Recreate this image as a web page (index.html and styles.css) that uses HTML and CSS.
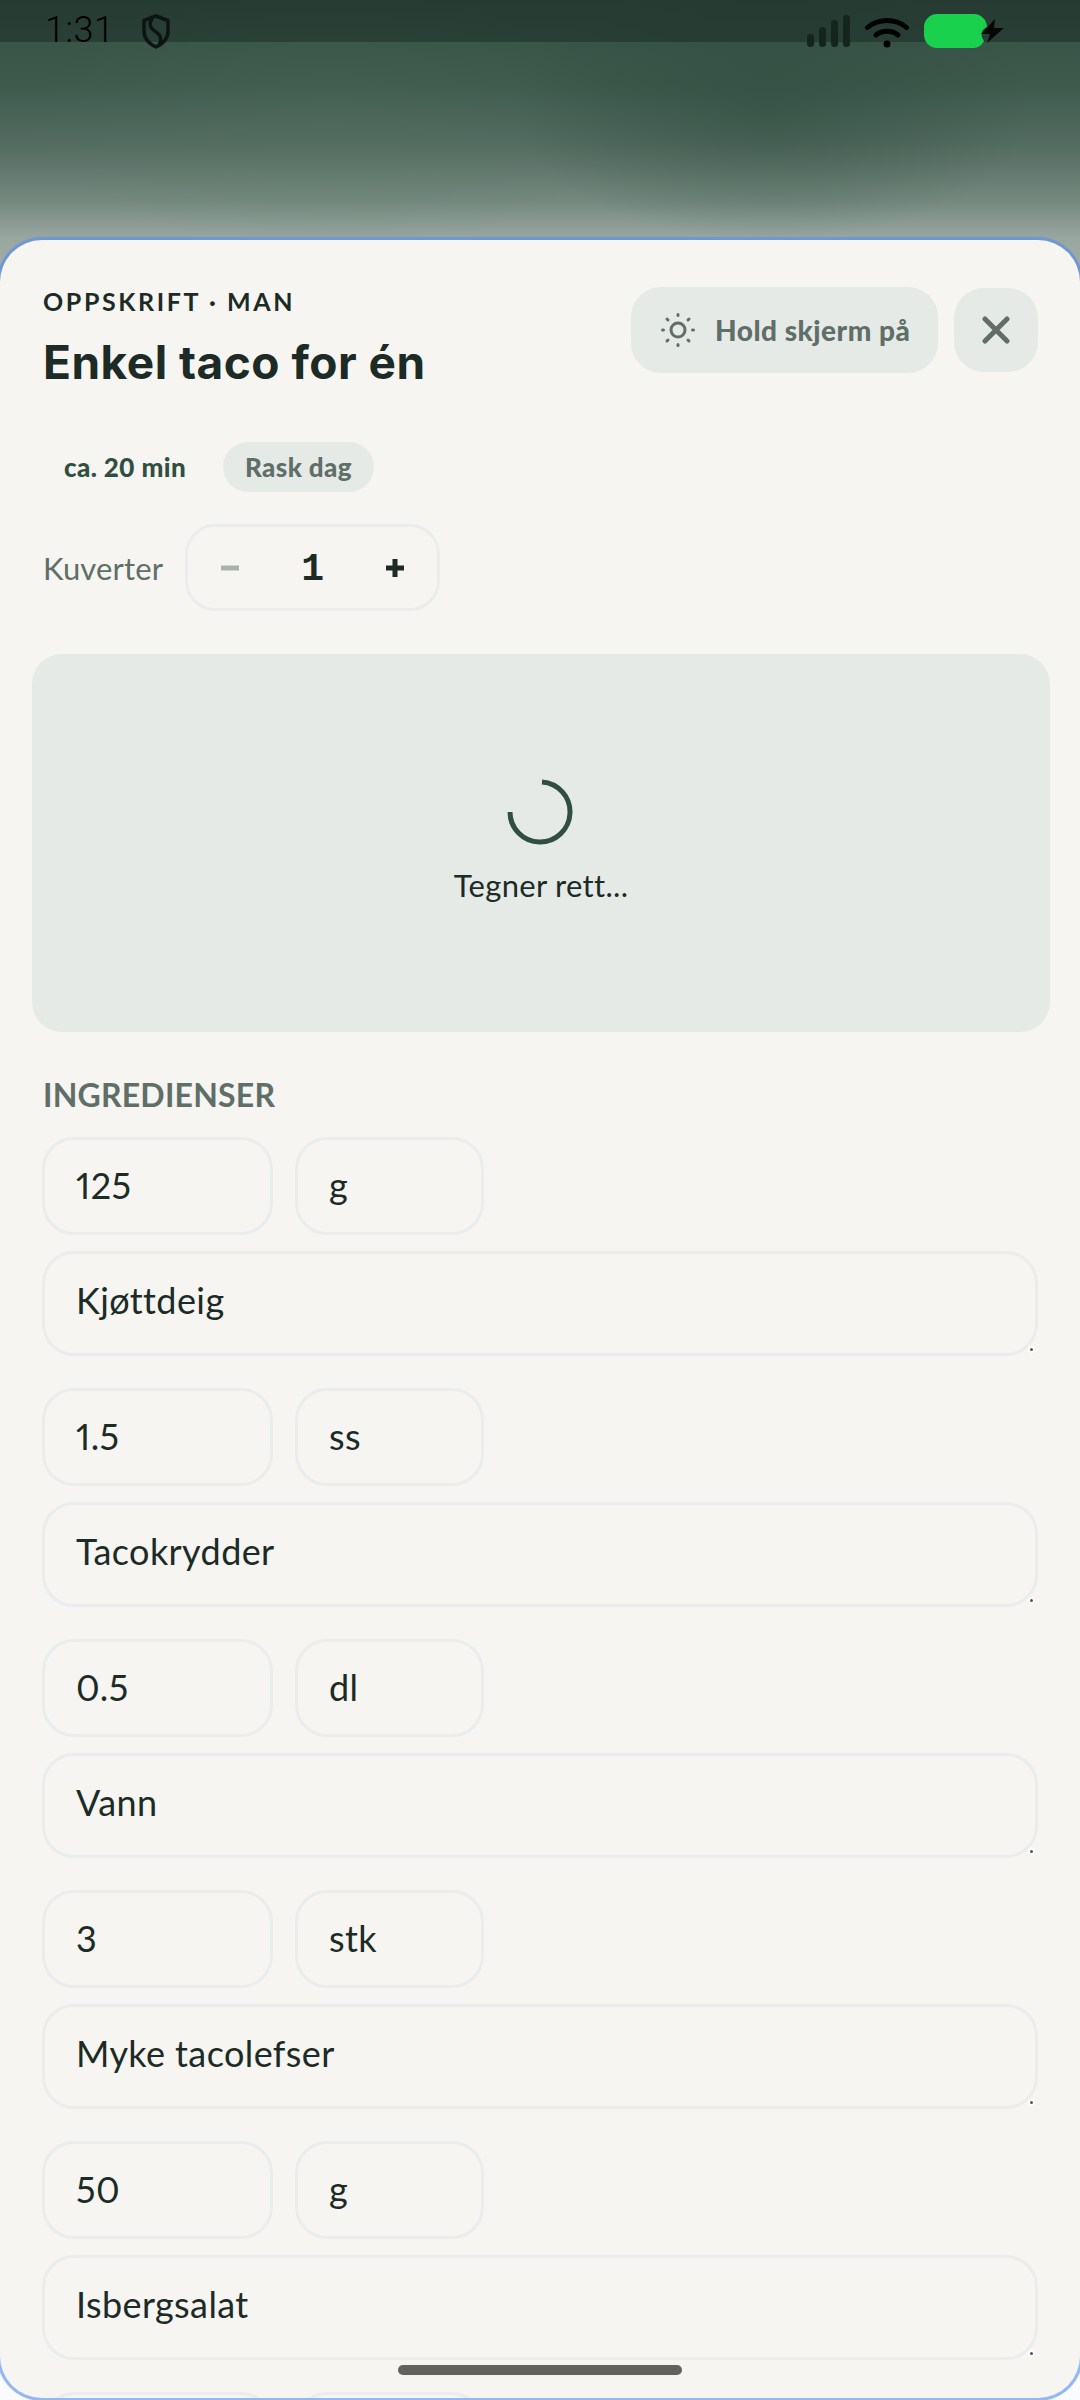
FILE: index.html
```html
<!DOCTYPE html>
<html lang="nb">
<head>
    <meta charset="UTF-8">
    <meta name="viewport" content="width=device-width, initial-scale=1.0">
    <title>Enkel taco for én</title>
    <link rel="stylesheet" href="styles.css">
</head>
<body>

<div class="backdrop">
    <div class="statusbar">
        <div class="status-left">
            <span class="clock">1:31</span>
            <svg class="shield" width="30" height="35" viewBox="0 0 30 35" fill="none" stroke="#0d1512" stroke-width="3.500" stroke-linecap="round" stroke-linejoin="round">
                <path d="M15 2 L27 6.500 V17 C27 25 21.500 30 15 33 C8.500 30 3 25 3 17 V6.500 Z"/>
                <path d="M11 5 C7 11 10 15 15 18 C20 21 21 26 18 31"/>
            </svg>
        </div>
        <div class="status-right">
            <div class="signal">
                <span class="bar bar1"></span>
                <span class="bar bar2"></span>
                <span class="bar bar3"></span>
                <span class="bar bar4"></span>
            </div>
            <svg class="wifi" width="44" height="31" viewBox="0 0 44 31" fill="none" stroke="#000" stroke-width="5" stroke-linecap="round">
                <path d="M2.500 10.500 C13 1 31 1 41.500 10.500"/>
                <path d="M11 18 C17 13 27 13 33 18"/>
                <circle cx="22" cy="27" r="3.500" fill="#000" stroke="none"/>
            </svg>
            <svg class="battery" width="81" height="34" viewBox="0 0 81 34">
                <path d="M13 0 H50 C57 0 63 6 63 13 C57 15 56 22 60 27 C58 31 54 34 50 34 H13 C6 34 0 28 0 21 V13 C0 6 6 0 13 0 Z" fill="#19d14c"/>
                <path d="M71 5 L57 20 H66 L63 29 L80 14 H70 Z" fill="#050807"/>
            </svg>
        </div>
    </div>
</div>

<div class="sheet">
    <div class="sheet-head">
        <div>
            <div class="eyebrow">OPPSKRIFT · MAN</div>
            <h1 class="title">Enkel taco for én</h1>
        </div>
        <div class="actions">
            <button class="keep-on">
                <svg width="36" height="36" viewBox="0 0 36 36" fill="none" stroke="#5f6f68" stroke-width="3" stroke-linecap="round">
                    <circle cx="18" cy="18" r="7"/>
                    <path d="M18 2.500 V3.500 M18 32.500 V33.500 M2.500 18 H3.500 M32.500 18 H33.500 M7 7 L8 8 M28 28 L29 29 M7 29 L8 28 M28 8 L29 7"/>
                </svg>
                Hold skjerm på
            </button>
            <button class="close">
                <svg width="28" height="28" viewBox="0 0 28 28" fill="none" stroke="#5f6f68" stroke-width="5" stroke-linecap="round">
                    <path d="M3 3 L25 25 M25 3 L3 25"/>
                </svg>
            </button>
        </div>
    </div>

    <div class="meta">
        <span class="time">ca. 20 min</span>
        <span class="tag">Rask dag</span>
    </div>

    <div class="servings">
        <span class="servings-label">Kuverter</span>
        <div class="stepper">
            <svg width="18" height="18" viewBox="0 0 18 18" fill="#a9b3ae"><rect x="0" y="6.500" width="18" height="5"/></svg>
            <span class="count">1</span>
            <svg width="18" height="18" viewBox="0 0 18 18" fill="#1c2b25"><rect x="0" y="6.500" width="18" height="5"/><rect x="6.500" y="0" width="5" height="18"/></svg>
        </div>
    </div>

    <div class="image-card">
        <svg class="spinner" width="66" height="66" viewBox="0 0 66 66" fill="none" stroke="#2f4f43" stroke-width="5">
            <path d="M35 3 A30 30 0 1 1 3 33"/>
        </svg>
        <div class="image-text">Tegner rett...</div>
    </div>

    <h2 class="section">INGREDIENSER</h2>

    <div class="ingredient">
        <div class="amounts">
            <div class="field qty">125</div>
            <div class="field unit">g</div>
        </div>
        <div class="field name">Kjøttdeig<span class="grip"></span></div>
    </div>
    <div class="ingredient">
        <div class="amounts">
            <div class="field qty">1.5</div>
            <div class="field unit">ss</div>
        </div>
        <div class="field name">Tacokrydder<span class="grip"></span></div>
    </div>
    <div class="ingredient">
        <div class="amounts">
            <div class="field qty">0.5</div>
            <div class="field unit">dl</div>
        </div>
        <div class="field name">Vann<span class="grip"></span></div>
    </div>
    <div class="ingredient">
        <div class="amounts">
            <div class="field qty">3</div>
            <div class="field unit">stk</div>
        </div>
        <div class="field name">Myke tacolefser<span class="grip"></span></div>
    </div>
    <div class="ingredient">
        <div class="amounts">
            <div class="field qty">50</div>
            <div class="field unit">g</div>
        </div>
        <div class="field name">Isbergsalat<span class="grip"></span></div>
    </div>
    <div class="ingredient">
        <div class="amounts">
            <div class="field qty"></div>
            <div class="field unit"></div>
        </div>
    </div>

    <div class="home-bar"></div>
</div>

</body>
</html>
```

FILE: styles.css
```css
html, body {
    margin: 0;
    padding: 0;
}

body {
    width: 1080px;
    height: 2400px;
    overflow: hidden;
    font-family: 'Lato', sans-serif;
    color: #1c2b25;
    background-color: #f9fbfe;
}

/* runs a little behind the sheet so the round corners show it */
.backdrop {
    height: 290px;
    margin-bottom: -53px;
    background:
        radial-gradient(ellipse 260px 130px at 770px 110px, rgba(38, 66, 54, 0.4), rgba(38, 66, 54, 0)),
        radial-gradient(ellipse 300px 130px at 330px 120px, rgba(88, 118, 102, 0.2), rgba(88, 118, 102, 0)),
        linear-gradient(to bottom, #345044 0%, #3d5a4d 29%, #566d62 51%, #768a80 70%, #98a69f 82%, #a8b3ad 100%);
}

.statusbar {
    height: 42px;
    background-color: rgba(8, 20, 14, 0.32);
    display: flex;
    justify-content: space-between;
}

.status-left {
    display: flex;
    align-items: flex-start;
    padding-left: 45px;
}

.clock {
    font-family: 'Roboto', sans-serif;
    font-weight: 300;
    font-size: 36px;
    line-height: 60px;
    letter-spacing: 0.5px;
    color: #000;
}

.shield {
    margin: 14px 0 0 27px;
}

.status-right {
    display: flex;
    align-items: flex-start;
    padding-right: 75px;
}

.signal {
    display: flex;
    align-items: flex-end;
    gap: 5px;
    height: 32px;
    margin-top: 15px;
}

.bar {
    width: 7px;
    border-radius: 4px;
    background-color: #14251e;
}

.bar1 { height: 13px; }
.bar2 { height: 20px; }
.bar3 { height: 27px; }
.bar4 { height: 32px; }

.wifi {
    margin: 17px 0 0 15px;
}

.battery {
    margin: 14px 0 0 15px;
}

/* wider than the screen by its border, so the blue only shows at top, bottom and corners */
.sheet {
    position: relative;
    box-sizing: border-box;
    height: 2164px;
    margin: 0 -3px;
    padding: 46px 42px 0 42px;
    overflow: hidden;
    border: 3px solid transparent;
    border-radius: 45px;
    background:
        linear-gradient(#f6f5f1, #f6f5f1) padding-box,
        linear-gradient(to bottom, #6f97d1 50%, #93b8f5 50%) border-box;
}

.sheet-head {
    display: flex;
    justify-content: space-between;
    padding-left: 1px;
}

.eyebrow {
    font-size: 25px;
    line-height: 30px;
    font-weight: 700;
    letter-spacing: 2.6px;
}

.title {
    margin: 19px 0 0;
    font-family: 'Inter', sans-serif;
    font-size: 46px;
    line-height: 54px;
    font-weight: 700;
    letter-spacing: 0.5px;
}

.actions {
    display: flex;
    gap: 16px;
    margin-top: 1px;
}

button {
    font-family: inherit;
    border: none;
    padding: 0;
    color: #5f6f68;
    background-color: #e6eae7;
}

.keep-on {
    display: flex;
    align-items: center;
    gap: 19px;
    width: 307px;
    height: 86px;
    padding-left: 29px;
    border-radius: 30px;
    font-size: 28px;
    font-weight: 900;
    letter-spacing: 0.5px;
}

.close {
    display: flex;
    align-items: center;
    justify-content: center;
    width: 84px;
    height: 84px;
    margin-top: 1px;
    border-radius: 30px;
}

.meta {
    display: flex;
    align-items: center;
    gap: 16px;
    height: 50px;
    margin-top: 53px;
    padding-left: 1px;
    font-size: 26px;
    font-weight: 900;
    letter-spacing: 0.4px;
}

.time {
    padding: 0 21px;
    color: #2f4f43;
}

.tag {
    height: 50px;
    line-height: 50px;
    padding: 0 22px;
    border-radius: 25px;
    color: #5f6f68;
    background-color: #e6eae7;
}

.servings {
    display: flex;
    align-items: center;
    gap: 22px;
    margin-top: 32px;
    padding-left: 1px;
}

.servings-label {
    font-size: 31px;
    letter-spacing: 0.15px;
    color: #5f6f68;
}

.stepper {
    box-sizing: border-box;
    display: flex;
    align-items: center;
    justify-content: space-between;
    width: 255px;
    height: 87px;
    padding: 0 33px;
    border: 3px solid #eaecee;
    border-radius: 30px;
}

.count {
    padding-top: 4px;
    font-family: 'Liberation Mono', monospace;
    font-size: 38px;
    font-weight: 700;
}

.image-card {
    box-sizing: border-box;
    display: flex;
    flex-direction: column;
    align-items: center;
    justify-content: center;
    gap: 20px;
    height: 378px;
    margin: 43px -12px 0 -10px;
    padding-bottom: 2px;
    border-radius: 30px;
    background-color: #e6eae7;
}

.spinner {
    margin-right: 2px;
}

.image-text {
    font-size: 31px;
    line-height: 40px;
    letter-spacing: 0.3px;
}

.section {
    margin: 43px 0 22px;
    padding-left: 1px;
    font-size: 32px;
    line-height: 40px;
    font-weight: 700;
    letter-spacing: 0.2px;
    color: #5f6f68;
}

.ingredient {
    display: flex;
    flex-direction: column;
    gap: 16px;
    margin-bottom: 32px;
}

.amounts {
    display: flex;
    gap: 22px;
}

.field {
    box-sizing: border-box;
    display: flex;
    align-items: center;
    padding: 0 0 2px 31px;
    border: 3px solid #eaecee;
    border-radius: 32px;
    font-size: 36px;
    font-variant-numeric: proportional-nums;
    letter-spacing: 0.4px;
}

.qty {
    width: 231px;
    height: 98px;
}

.unit {
    width: 189px;
    height: 98px;
}

.name {
    position: relative;
    height: 105px;
    padding-bottom: 8px;
}

/* little resize handle in the corner of each name box */
.grip {
    position: absolute;
    right: 2px;
    bottom: 2px;
    width: 3px;
    height: 3px;
    border-radius: 50%;
    background-color: #555;
    box-shadow: 0 0 2px 2px #fff;
}

.home-bar {
    position: absolute;
    left: 398px;
    bottom: 23px;
    width: 284px;
    height: 10px;
    border-radius: 5px;
    background-color: #63625e;
}
```
